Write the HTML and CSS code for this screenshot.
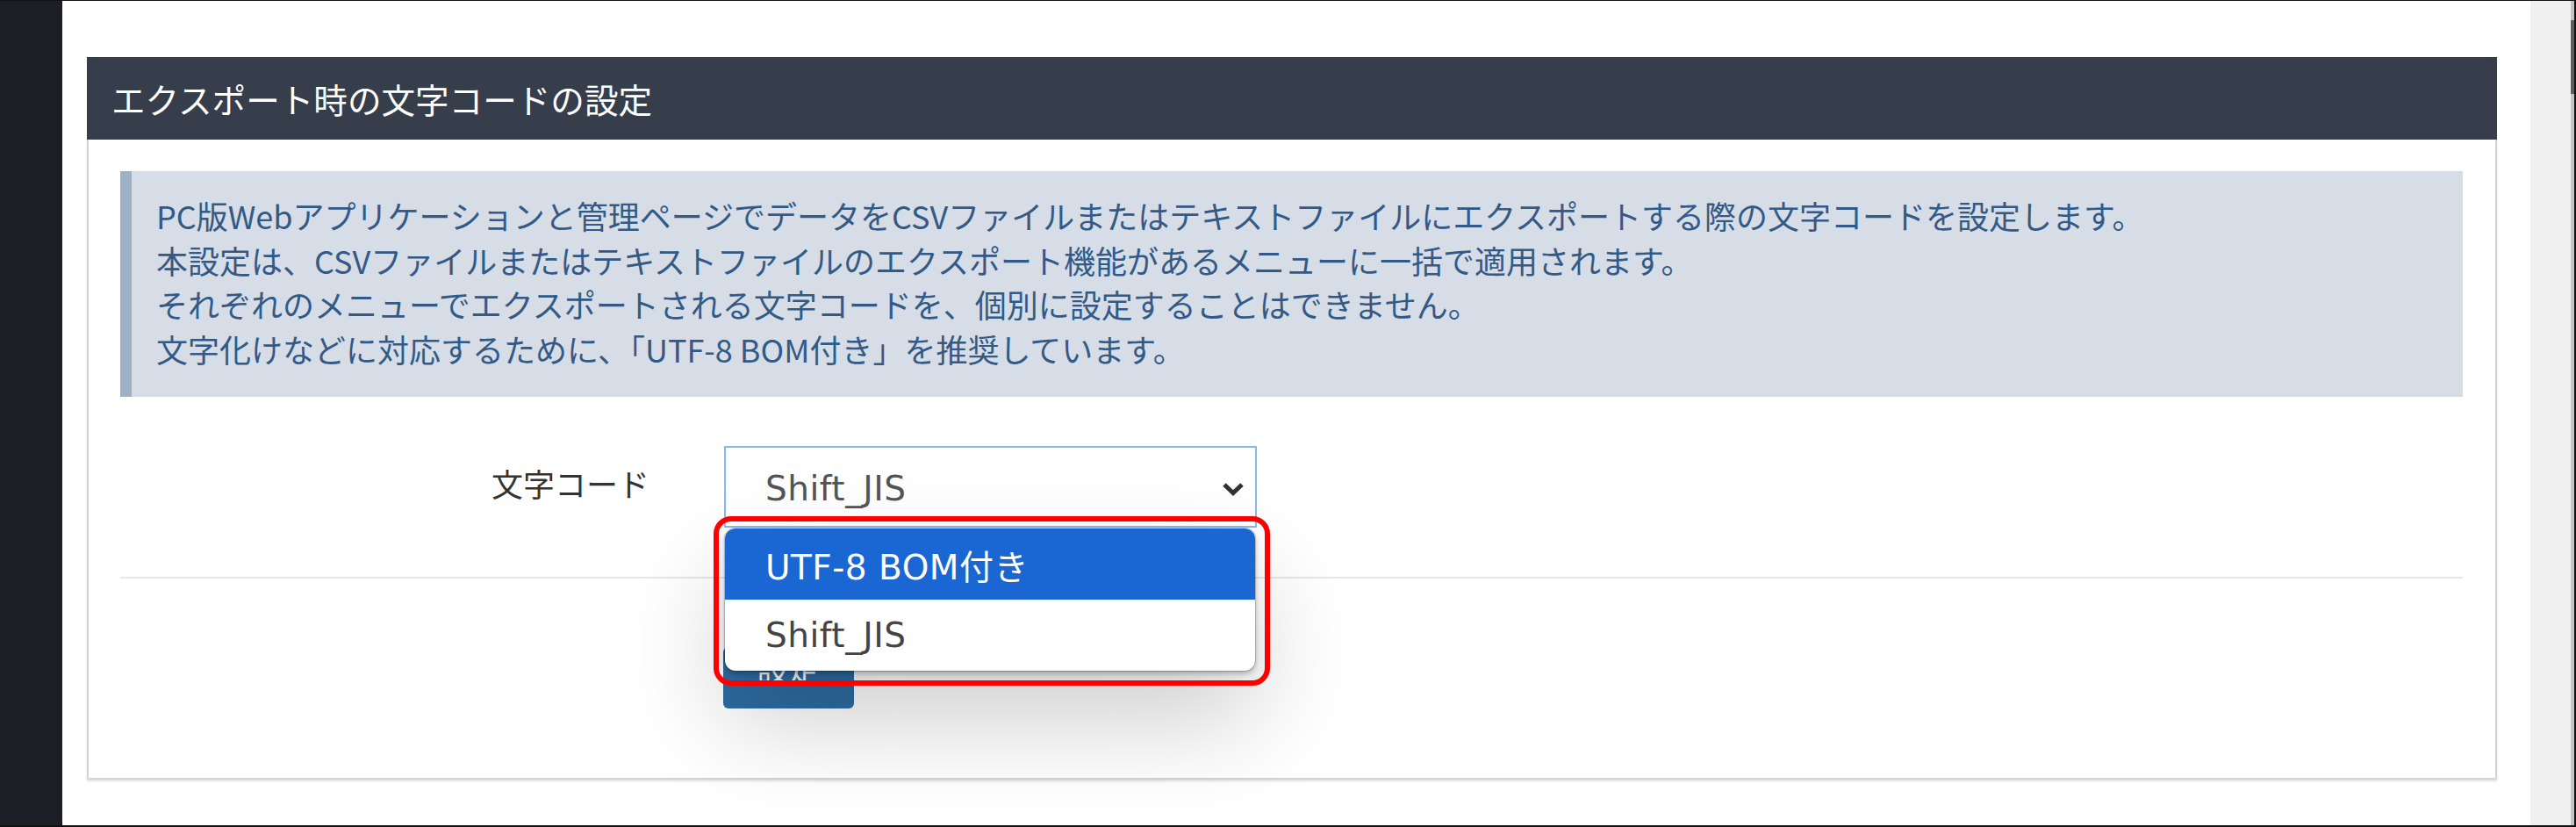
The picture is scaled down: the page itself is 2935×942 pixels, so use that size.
FILE: index.html
```html
<!DOCTYPE html>
<html lang="ja">
<head>
<meta charset="utf-8">
<title>エクスポート時の文字コードの設定</title>
<link rel="stylesheet" href="styles.css">
</head>
<body>
<div class="screen">
  <aside class="sidebar"></aside>
  <main class="main">
    <section class="panel">
      <header class="panel-heading">エクスポート時の文字コードの設定</header>
      <div class="panel-body">
        <div class="info">
          <p>PC版Webアプリケーションと管理ページでデータをCSVファイルまたはテキストファイルにエクスポートする際の文字コードを設定します。</p>
          <p>本設定は、CSVファイルまたはテキストファイルのエクスポート機能があるメニューに一括で適用されます。</p>
          <p>それぞれのメニューでエクスポートされる文字コードを、個別に設定することはできません。</p>
          <p>文字化けなどに対応するために、「UTF-8 BOM付き」を推奨しています。</p>
        </div>
        <div class="form-row">
          <label class="form-label">文字コード</label>
          <div class="select-wrap">
            <div class="select">
              <span class="select-value">Shift_JIS</span>
              <svg class="chevron" width="26" height="16" viewBox="0 0 26 16"><path d="M3 3 L13 12.5 L23 3" fill="none" stroke="#333" stroke-width="5"/></svg>
            </div>
            <div class="dropdown">
              <div class="option active">UTF-8 BOM付き</div>
              <div class="option">Shift_JIS</div>
            </div>
            <div class="annotation"></div>
          </div>
        </div>
        <hr class="sep">
        <div class="actions">
          <button class="btn">設定</button>
        </div>
      </div>
    </section>
  </main>
  <div class="gutter"></div>
  <div class="scrollbar"><div class="thumb"></div></div>
</div>
</body>
</html>
```

FILE: styles.css
```css
* { box-sizing: border-box; }
html, body { margin: 0; padding: 0; }
body {
  width: 2935px;
  height: 942px;
  overflow: hidden;
  background: #fff;
  font-family: "Noto Sans CJK JP", "Noto Sans", sans-serif;
}
.screen {
  display: flex;
  width: 2935px;
  height: 942px;
  border-top: 1px solid #111;
  border-bottom: 2px solid #111;
  border-right: 2px solid #111;
}
.sidebar {
  width: 71px;
  flex: none;
  background: #1b1e25;
}
.main {
  flex: 1;
  background: #fff;
  padding: 64px 38px 0 28px;
}
.gutter {
  width: 46px;
  flex: none;
  background: #f0f0f0;
}
.scrollbar {
  width: 4px;
  flex: none;
  background: #c4c4c4;
  padding-top: 22px;
}
.thumb {
  height: 84px;
  background: #5c5c5c;
}
.panel {
  width: 2746px;
}
.panel-heading {
  height: 94px;
  background: #363d4b;
  color: #fff;
  font-size: 38.6px;
  line-height: 94px;
  padding-left: 28px;
}
.panel-body {
  border: 2px solid #d4d4d4;
  border-top: none;
  box-shadow: 0 2px 2px rgba(0,0,0,0.12);
  padding: 36px 37px 79px 36px;
}
.info {
  background: #d6dde7;
  border-left: 13px solid #9db2c7;
  padding: 25px 28px 30px;
  color: #335a86;
  font-size: 36px;
  line-height: 50.7px;
  height: 257px;
}
.info p { margin: 0; white-space: nowrap; }
.form-row {
  display: flex;
  gap: 85px;
  margin-top: 56px;
}
.form-label {
  width: 603px;
  flex: none;
  text-align: right;
  font-size: 36px;
  line-height: 50px;
  padding-top: 17px;
  color: #333;
}
.select-wrap {
  position: relative;
  width: 607px;
}
.select {
  height: 93px;
  border: 2px solid #86b9ea;
  background: #fff;
  display: flex;
  align-items: center;
  justify-content: space-between;
  padding: 4px 12px 0 45px;
}
.select-value, .option {
  font-family: "DejaVu Sans", "Noto Sans CJK JP", sans-serif;
  font-size: 39px;
  letter-spacing: 0.5px;
}
.select-value { color: #555; }
.dropdown {
  position: absolute;
  left: 1px;
  top: 94px;
  width: 604px;
  z-index: 2;
  background: #fff;
  border-radius: 12px;
  overflow: hidden;
  box-shadow: 0 0 0 1px rgba(0,0,0,0.18), 0 3px 6px rgba(0,0,0,0.28), 0 55px 120px rgba(0,0,0,0.2);
}
.option {
  height: 81px;
  display: flex;
  align-items: center;
  padding-left: 46px;
  color: #444;
}
.option.active {
  background: #1a66d2;
  color: #fff;
}
.annotation {
  position: absolute;
  left: -12px;
  top: 80px;
  width: 634px;
  height: 193px;
  border: 6px solid #f00;
  border-radius: 20px;
  z-index: 3;
}
.sep {
  margin: 56px 0 0;
  border: none;
  border-top: 2px solid #e7e7e7;
  height: 0;
}
.actions {
  padding-left: 687px;
  margin-top: 78px;
}
.btn {
  width: 149px;
  height: 70px;
  border: none;
  border-radius: 6px;
  background: #2d6ca3;
  color: #fff;
  font-family: "Noto Sans CJK JP", sans-serif;
  font-size: 36px;
  line-height: 1;
  padding: 0 0 24px;
}
```
